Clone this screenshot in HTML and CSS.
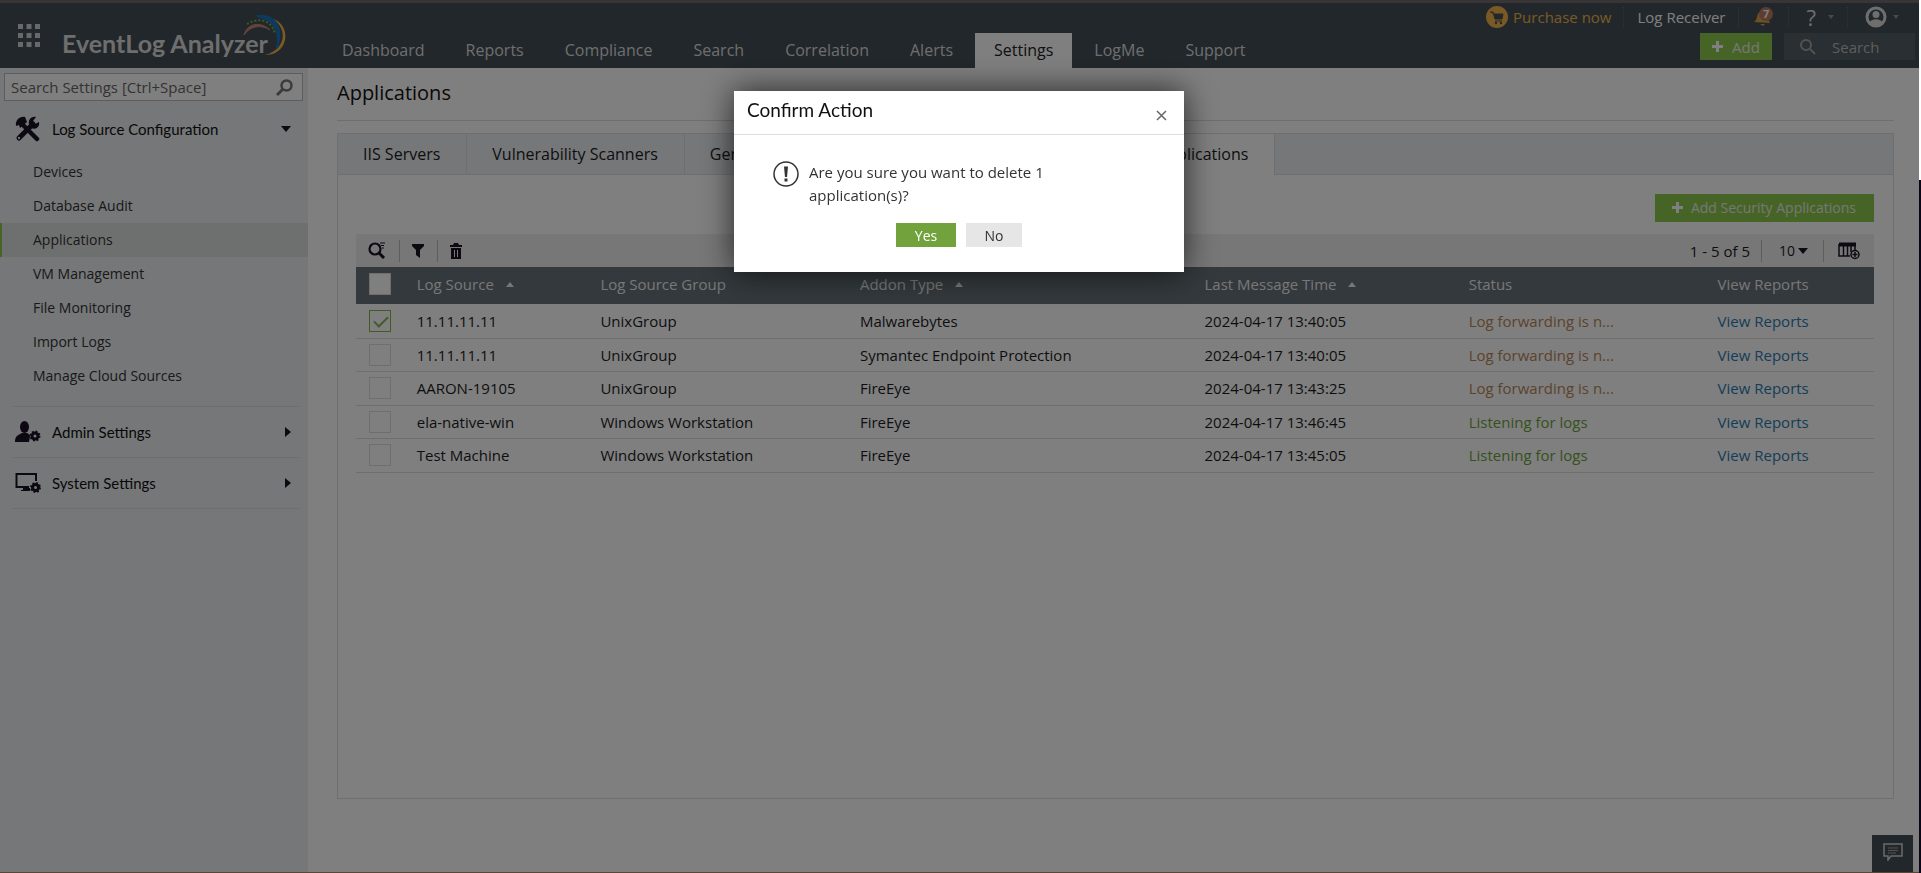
FILE: index.html
```
<!DOCTYPE html>
<html lang="en">
<head>
    <meta charset="UTF-8">
    <meta name="viewport" content="width=device-width, initial-scale=1.0">
    <title>EventLog Analyzer - Applications</title>
    <link rel="stylesheet" href="styles.css">
</head>
<body>
    <header class="header">
        <button class="apps-btn" aria-label="Apps">
            <svg width="22" height="24" viewBox="0 0 22 24" fill="#fff"><path d="M0 0h5v5H0zM8.500 0h5v5h-5zM17 0h5v5h-5zM0 9h5v5H0zM8.500 9h5v5h-5zM17 9h5v5h-5zM0 18h5v5H0zM8.500 18h5v5h-5zM17 18h5v5h-5z"/></svg>
        </button>
        <a href="#" class="logo">EventLog Analyzer
            <svg class="swoosh" width="44" height="42" viewBox="0 0 44 42" fill="none">
                <path d="M28 3C45 12 44 34 22 40C38 41 47 25 40 12C38 8 34 5 28 3z" fill="#f5b54a"/>
                <path d="M14 1C32-1 41 12 34 33C38 14 29 4 14 1z" fill="#1c74bb" stroke="#1c74bb" stroke-width="2"/>
                <path d="M4 9C14 3 28 3 32 19" stroke="#6fb53c" stroke-width="2" stroke-dasharray="2 2"/>
                <path d="M1 20C4 8 18 6 27 15C18 9 7 11 1 20z" fill="#c98a78" stroke="#c98a78"/>
            </svg>
        </a>
        <nav class="nav">
            <a href="#">Dashboard</a>
            <a href="#">Reports</a>
            <a href="#">Compliance</a>
            <a href="#">Search</a>
            <a href="#">Correlation</a>
            <a href="#">Alerts</a>
            <a href="#" class="active">Settings</a>
            <a href="#">LogMe</a>
            <a href="#">Support</a>
        </nav>
        <div class="header-right">
            <div class="user-links">
                <a href="#" class="purchase">
                    <svg width="22" height="22" viewBox="0 0 22 22"><circle cx="11" cy="11" r="11" fill="#f2b54a"/><path d="M4 6h3l2 7h7l1-5H8" fill="#444f56" stroke="#444f56"/><path d="M9 15h7" stroke="#444f56"/><circle cx="10" cy="17" r="1.200" fill="#444f56"/><circle cx="15" cy="17" r="1.200" fill="#444f56"/></svg>
                    Purchase now
                </a>
                <a href="#" class="receiver">Log Receiver</a>
                <button class="link-btn bell" aria-label="Notifications">
                    <svg width="19" height="20" viewBox="0 0 19 20"><path d="M0 15C4 13 2 6 7 4C12 2 15 7 14 12L16 16z" fill="#d9a04c"/><path d="M6 17h5l-2 2z" fill="#d9a04c"/><circle cx="12" cy="7" r="7" fill="#b87a5e"/><text x="9" y="11" class="bell-count">7</text></svg>
                </button>
                <button class="link-btn help" aria-label="Help"><span>?</span>
                    <svg width="6" height="4" viewBox="0 0 6 4" fill="#8b9398"><path d="M0 0h6L3 4z"/></svg>
                </button>
                <button class="link-btn profile" aria-label="Profile">
                    <svg width="22" height="22" viewBox="0 0 22 22"><circle cx="11" cy="11" r="9" fill="none" stroke="#ddd" stroke-width="3"/><circle cx="11" cy="8.500" r="3.500" fill="#ddd"/><path d="M4 17C6 12 16 12 18 17L11 21z" fill="#ddd"/></svg>
                    <svg width="6" height="4" viewBox="0 0 6 4" fill="#8b9398"><path d="M0 0h6L3 4z"/></svg>
                </button>
            </div>
            <div class="quick-actions">
                <button class="add-btn">
                    <svg width="11" height="11" viewBox="0 0 11 11"><path d="M5.500 0v11M0 5.500h11" stroke="#fff" stroke-width="3"/></svg>
                    Add
                </button>
                <label class="global-search">
                    <svg width="17" height="16" viewBox="0 0 17 16" fill="none" stroke="#a9a39f"><circle cx="7" cy="6" r="5" stroke-width="2"/><path d="M11 10l5 5" stroke-width="2"/></svg>
                    <input type="text" placeholder="Search" aria-label="Search">
                </label>
            </div>
        </div>
    </header>

    <div class="page">
        <aside class="sidebar">
            <label class="settings-search">
                <input type="text" placeholder="Search Settings [Ctrl+Space]" aria-label="Search Settings">
                <svg width="17" height="17" viewBox="0 0 17 17" fill="none" stroke="#777"><circle cx="10.500" cy="6.500" r="5" stroke-width="2.500"/><path d="M7 10l-6 6" stroke-width="3"/></svg>
            </label>
            <section class="group">
                <button class="group-title">
                    <svg width="26" height="26" viewBox="0 0 26 26"><path d="M5 6L22 23" stroke="#1a1225" stroke-width="4.500" stroke-linecap="round"/><path d="M4 22L18 8" stroke="#1a1225" stroke-width="5" stroke-linecap="round"/><path d="M1 10C0 4 5 0 10 1L12 6L5 12L4 9z" fill="#1a1225"/><path d="M14 8C13 3 17 0 21 1L18 5L20 8L24 6C25 11 21 14 16 12z" fill="#1a1225"/><circle cx="4" cy="22" r="1.200" fill="#ddd"/></svg>
                    <span>Log Source Configuration</span>
                    <svg width="10" height="6" viewBox="0 0 10 6" fill="#1a1225"><path d="M0 0h10L5 6z"/></svg>
                </button>
                <ul class="menu">
                    <li><a href="#">Devices</a></li>
                    <li><a href="#">Database Audit</a></li>
                    <li><a href="#" class="current">Applications</a></li>
                    <li><a href="#">VM Management</a></li>
                    <li><a href="#">File Monitoring</a></li>
                    <li><a href="#">Import Logs</a></li>
                    <li><a href="#">Manage Cloud Sources</a></li>
                </ul>
            </section>
            <section class="group">
                <button class="group-title">
                    <svg width="26" height="22" viewBox="0 0 26 22" fill="#1a1225"><ellipse cx="9.500" cy="6" rx="4.500" ry="6"/><path d="M0 21C0 15 3 14 7 12H12C14 13 15 14 15 15L14 21z"/><circle cx="20" cy="15" r="3" fill="none" stroke="#1a1225" stroke-width="3"/><circle cx="20" cy="15" r="4.500" fill="none" stroke="#1a1225" stroke-width="2" stroke-dasharray="1.800 1.734"/></svg>
                    <span>Admin Settings</span>
                    <svg width="6" height="10" viewBox="0 0 6 10" fill="#1a1225"><path d="M0 0v10L6 5z"/></svg>
                </button>
            </section>
            <section class="group">
                <button class="group-title">
                    <svg width="26" height="22" viewBox="0 0 26 22" fill="#1a1225"><path d="M14 15H1.500V2H21v7" fill="none" stroke="#1a1225" stroke-width="2"/><path d="M8 16h7v3H6v-1h2z"/><circle cx="20.500" cy="15.500" r="3" fill="none" stroke="#1a1225" stroke-width="3"/><circle cx="20.500" cy="15.500" r="4.500" fill="none" stroke="#1a1225" stroke-width="2" stroke-dasharray="1.800 1.734"/></svg>
                    <span>System Settings</span>
                    <svg width="6" height="10" viewBox="0 0 6 10" fill="#1a1225"><path d="M0 0v10L6 5z"/></svg>
                </button>
            </section>
        </aside>

        <main class="content">
            <h1>Applications</h1>
            <div class="panel">
                <div class="tabs">
                    <a href="#">IIS Servers</a>
                    <a href="#">Vulnerability Scanners</a>
                    <a href="#">General Applications</a>
                    <a href="#">Terminal Servers</a>
                    <a href="#" class="selected">Security Applications</a>
                </div>
                <div class="panel-body">
                    <button class="add-app-btn">
                        <svg width="11" height="11" viewBox="0 0 11 11"><path d="M5.500 0v11M0 5.500h11" stroke="#fff" stroke-width="3"/></svg>
                        Add Security Applications
                    </button>
                    <div class="toolbar">
                        <button aria-label="Search">
                            <svg width="18" height="17" viewBox="0 0 18 17" fill="none" stroke="#1a1225"><circle cx="7" cy="7" r="5.500" stroke-width="2.200"/><path d="M11 11l5 5" stroke-width="3"/><path d="M12 1h5M13 3.500h3M14 6h2" stroke-width="1"/></svg>
                        </button>
                        <button aria-label="Filter">
                            <svg width="12" height="14" viewBox="0 0 12 14" fill="#1a1225"><path d="M0 0h12v2L8 6v8L4 11V6L0 2z"/></svg>
                        </button>
                        <button aria-label="Delete">
                            <svg width="12" height="16" viewBox="0 0 12 16" fill="#1a1225"><path d="M0 2h3l1-2h4l1 2h3v2H0zM1 5h10v11H1z"/><path d="M4.500 7v7M7.500 7v7" stroke="#eee"/></svg>
                        </button>
                        <span class="range">1 - 5 of 5</span>
                        <button class="page-size">10
                            <svg width="10" height="6" viewBox="0 0 10 6" fill="#1a1225"><path d="M0 0h10L5 6z"/></svg>
                        </button>
                        <button class="columns-btn" aria-label="Columns">
                            <svg width="22" height="18" viewBox="0 0 22 18"><path d="M1 2.500h17" stroke="#1a1225" stroke-width="4"/><path d="M1 2v12h11M5.500 4v10M9.500 4v10M13 4v6M17 4v4" fill="none" stroke="#1a1225" stroke-width="1.500"/><circle cx="17" cy="12.500" r="4" fill="#eee" stroke="#1a1225" stroke-width="1.500"/><path d="M17 10v5M14.500 12.500h5" stroke="#1a1225" stroke-width="1.500"/></svg>
                        </button>
                    </div>
                    <table class="apps-table">
                        <thead>
                            <tr>
                                <th class="col-check"><input type="checkbox" aria-label="Select all"></th>
                                <th class="col-source">Log Source <i class="sort"></i></th>
                                <th class="col-group">Log Source Group</th>
                                <th class="col-type">Addon Type <i class="sort"></i></th>
                                <th class="col-time">Last Message Time <i class="sort"></i></th>
                                <th class="col-status">Status</th>
                                <th class="col-reports">View Reports</th>
                            </tr>
                        </thead>
                        <tbody>
                            <tr>
                                <td><input type="checkbox" aria-label="Select row 1" checked></td>
                                <td>11.11.11.11</td>
                                <td>UnixGroup</td>
                                <td>Malwarebytes</td>
                                <td>2024-04-17 13:40:05</td>
                                <td class="warn">Log forwarding is n...</td>
                                <td><a href="#">View Reports</a></td>
                            </tr>
                            <tr>
                                <td><input type="checkbox" aria-label="Select row 2"></td>
                                <td>11.11.11.11</td>
                                <td>UnixGroup</td>
                                <td>Symantec Endpoint Protection</td>
                                <td>2024-04-17 13:40:05</td>
                                <td class="warn">Log forwarding is n...</td>
                                <td><a href="#">View Reports</a></td>
                            </tr>
                            <tr>
                                <td><input type="checkbox" aria-label="Select row 3"></td>
                                <td>AARON-19105</td>
                                <td>UnixGroup</td>
                                <td>FireEye</td>
                                <td>2024-04-17 13:43:25</td>
                                <td class="warn">Log forwarding is n...</td>
                                <td><a href="#">View Reports</a></td>
                            </tr>
                            <tr>
                                <td><input type="checkbox" aria-label="Select row 4"></td>
                                <td>ela-native-win</td>
                                <td>Windows Workstation</td>
                                <td>FireEye</td>
                                <td>2024-04-17 13:46:45</td>
                                <td class="ok">Listening for logs</td>
                                <td><a href="#">View Reports</a></td>
                            </tr>
                            <tr>
                                <td><input type="checkbox" aria-label="Select row 5"></td>
                                <td>Test Machine</td>
                                <td>Windows Workstation</td>
                                <td>FireEye</td>
                                <td>2024-04-17 13:45:05</td>
                                <td class="ok">Listening for logs</td>
                                <td><a href="#">View Reports</a></td>
                            </tr>
                        </tbody>
                    </table>
                </div>
            </div>
        </main>
    </div>

    <button class="chat-btn" aria-label="Chat">
        <svg width="20" height="18" viewBox="0 0 20 18" fill="none" stroke="#d5d5d5"><path d="M1 1h18v12H8l-3 4v-4H1z" stroke-width="1.500"/><path d="M5 5h10M5 7.500h10M5 10h8" stroke="#aaa49e"/></svg>
    </button>

    <div class="overlay">
        <div class="modal" role="dialog" aria-labelledby="modal-title">
            <div class="modal-head">
                <h2 id="modal-title">Confirm Action</h2>
                <button class="close-btn" aria-label="Close">
                    <svg width="11" height="11" viewBox="0 0 11 11" stroke="#666" stroke-width="1.500"><path d="M1 1l9 9M10 1l-9 9"/></svg>
                </button>
            </div>
            <div class="modal-body">
                <svg width="26" height="26" viewBox="0 0 26 26"><circle cx="13" cy="13" r="12" fill="none" stroke="#333" stroke-width="1.500"/><path d="M11 5.500h4L14 16h-2z" fill="#333"/><rect x="11.500" y="17.500" width="3" height="3" fill="#333"/></svg>
                <p>Are you sure you want to delete 1 application(s)?</p>
            </div>
            <div class="modal-actions">
                <button class="yes-btn">Yes</button>
                <button class="no-btn">No</button>
            </div>
        </div>
    </div>
    <div class="scroll-track"><div class="scroll-thumb"></div></div>
</body>
</html>
```
FILE: styles.css
```
* {
    box-sizing: border-box;
}
body {
    margin: 0;
    padding-right: 2px;
    min-height: 100vh;
    display: flex;
    flex-direction: column;
    font-family: "Open Sans", "Noto Sans", sans-serif;
    font-size: 15px;
    color: #1c1c24;
    background: #fff;
    border-bottom: 1px solid #b68c6c;
}
a {
    color: inherit;
    text-decoration: none;
}
button {
    font: inherit;
    color: inherit;
    border: none;
    background: none;
    padding: 0;
    cursor: pointer;
}
input {
    font: inherit;
}
svg {
    flex: none;
}

/* header */
.header {
    display: flex;
    height: 68px;
    background: #444f56;
    border-top: 3px solid #736b6c;
    color: #ddd;
}
.apps-btn {
    align-self: flex-start;
    margin: 21px 0 0 18px;
    line-height: 0;
}
.apps-btn svg {
    opacity: 0.75;
}
.logo {
    position: relative;
    width: 280px;
    padding: 24px 0 0 22px;
    font-family: Lato, sans-serif;
    font-size: 25px;
    font-weight: bold;
    line-height: 32px;
    white-space: nowrap;
}
.swoosh {
    position: absolute;
    left: 203px;
    top: 12px;
}
.nav {
    display: flex;
    align-items: flex-end;
    gap: 3px;
    margin-left: 3px;
}
.nav a {
    padding: 0 19px;
    font-size: 16px;
    line-height: 35px;
}
.nav .active {
    background: #fff;
    color: #222;
}
.header-right {
    margin-left: auto;
    display: flex;
    flex-direction: column;
    align-items: flex-end;
    padding-right: 4px;
}
.user-links {
    display: flex;
    align-items: center;
    height: 30px;
    padding: 0 16px 2px 0;
}
.purchase {
    display: flex;
    align-items: center;
    gap: 5px;
    padding-right: 12px;
    color: #f2b54a;
}
.receiver,
.link-btn {
    border-left: 1px dotted #5f6b72;
    line-height: 20px;
}
.receiver {
    padding: 0 12px 0 13px;
    color: #fff;
}
.link-btn {
    display: flex;
    align-items: center;
    height: 20px;
}
.bell {
    padding: 0 15px;
}
.bell-count {
    font-family: "Open Sans", sans-serif;
    font-size: 11px;
    font-weight: bold;
    fill: #fff;
}
.help {
    gap: 12px;
    padding: 0 13px 0 18px;
    font-size: 22px;
}
.profile {
    gap: 6px;
    padding-left: 17px;
}
.quick-actions {
    display: flex;
    gap: 12px;
}
.add-btn {
    display: flex;
    align-items: center;
    justify-content: center;
    gap: 9px;
    width: 72px;
    height: 27px;
    background: #8cc84a;
    color: #eee;
}
.global-search {
    display: flex;
    align-items: center;
    gap: 16px;
    width: 131px;
    height: 27px;
    padding-left: 15px;
    background: #535e65;
}
.global-search input {
    width: 80px;
    padding: 0;
    border: none;
    background: none;
}
.global-search input::placeholder {
    color: #bbb;
}

/* sidebar */
.page {
    flex: 1;
    display: flex;
}
.sidebar {
    width: 308px;
    flex: none;
    background: #ebeef0;
}
.settings-search {
    display: flex;
    align-items: center;
    height: 28px;
    margin: 5px 5px 3px 4px;
    padding: 0 9px 0 6px;
    background: #fff;
    border: 1px solid #bbb;
}
.settings-search input {
    flex: 1;
    min-width: 0;
    padding: 0;
    border: none;
    background: none;
}
.settings-search input::placeholder {
    color: #666;
}
.group {
    margin: 0 9px 0 12px;
    border-bottom: 1px solid #dadddf;
}
.group-title {
    display: flex;
    align-items: center;
    gap: 11px;
    width: 100%;
    height: 50px;
    padding: 0 8px 0 3px;
    font-family: Lato, sans-serif;
    text-align: left;
    color: #111;
}
.group-title span {
    flex: 1;
}
.menu {
    list-style: none;
    margin: 1px -9px 13px -12px;
    padding: 0;
}
.menu a {
    display: block;
    padding-left: 31px;
    border-left: 2px solid transparent;
    font-size: 14px;
    line-height: 34px;
    color: #333;
}
.menu .current {
    background: #dde0df;
    border-left-color: #8cc84a;
}

/* content */
.content {
    flex: 1;
    min-width: 0;
    display: flex;
    flex-direction: column;
    padding: 0 25px 73px 29px;
}
h1 {
    margin: 0 0 12px;
    height: 53px;
    font-size: 20px;
    font-weight: normal;
    line-height: 50px;
    border-bottom: 1px solid #ddd;
    color: #111;
}
.panel {
    flex: 1;
    border: 1px solid #dcdfe0;
}
.tabs {
    display: flex;
    height: 41px;
    background: #ebeef0;
    border-bottom: 1px solid #dcdfe0;
}
.tabs a {
    padding: 0 26px 0 25px;
    font-size: 16px;
    line-height: 40px;
    white-space: nowrap;
    border-right: 1px solid #dcdfe0;
}
.tabs .selected {
    height: 41px;
    background: #fff;
}
.panel-body {
    display: flex;
    flex-direction: column;
    padding: 19px 19px 0 18px;
}
.add-app-btn {
    align-self: flex-end;
    display: flex;
    align-items: center;
    gap: 8px;
    height: 28px;
    margin-bottom: 12px;
    padding: 0 18px 2px 17px;
    font-size: 14px;
    background: #8cc84a;
    color: #eee;
}
.toolbar {
    display: flex;
    align-items: center;
    height: 33px;
    background: #efefef;
}
.toolbar button {
    display: flex;
    align-items: center;
    height: 22px;
    padding: 0 13px 0 12px;
}
.toolbar button + button,
.toolbar .page-size {
    border-left: 1px solid #bbb;
}
.range {
    margin-left: auto;
    padding-right: 11px;
}
.toolbar .page-size {
    gap: 3px;
    padding: 0 15px 0 17px;
    font-size: 14px;
}
.toolbar .columns-btn {
    padding: 0 14px;
}
.apps-table {
    width: 100%;
    table-layout: fixed;
    border-collapse: collapse;
}
.apps-table th {
    height: 37px;
    padding: 0 0 3px;
    font-weight: normal;
    text-align: left;
    background: #66727a;
    color: #eee;
}
.apps-table td {
    height: 34px;
    padding: 0;
    border-bottom: 1px solid #dcdcdc;
}
.apps-table tr:nth-child(even) td {
    height: 33px;
}
.apps-table td a {
    color: #2a7ab0;
}
.apps-table .warn {
    color: #b98659;
}
.apps-table .ok {
    color: #6ba33a;
}
.col-check { width: 4%; }
.col-source { width: 12.1%; }
.col-group { width: 17.1%; }
.col-type { width: 22.7%; }
.col-time { width: 17.4%; }
.col-status { width: 16.4%; }
.sort {
    display: inline-block;
    margin: 0 0 3px 8px;
    border: 4px solid transparent;
    border-top: none;
    border-bottom: 5px solid #eee;
}
.apps-table input {
    appearance: none;
    display: block;
    width: 22px;
    height: 22px;
    margin: 0 0 0 13px;
    border: 1px solid #dcdcdc;
    background: #fff;
}
.apps-table input:checked {
    border: 1px solid #7fb944;
}
.apps-table input:checked::before {
    content: "";
    display: block;
    width: 12px;
    height: 6px;
    margin: 5px 0 0 4px;
    border: solid #8fb457;
    border-width: 0 0 2px 2px;
    transform: rotate(-45deg);
}
.chat-btn {
    position: fixed;
    right: 8px;
    bottom: 1px;
    width: 41px;
    height: 37px;
    background: #444f56;
}

/* dialog */
.overlay {
    position: fixed;
    inset: 0;
    display: flex;
    justify-content: center;
    align-items: flex-start;
    padding: 91px 3px 0 0;
    background: rgba(0, 0, 0, 0.5);
}
.modal {
    width: 450px;
    padding-bottom: 25px;
    background: #fff;
    box-shadow: 0 0 30px rgba(0, 0, 0, 0.7);
    color: #333;
}
.modal-head {
    display: flex;
    justify-content: space-between;
    height: 44px;
    padding: 0 17px 0 13px;
    border-bottom: 1px solid #ddd;
}
.modal-head h2 {
    margin: 0;
    font-family: Lato, sans-serif;
    font-size: 19px;
    font-weight: normal;
    line-height: 38px;
    color: #111;
}
.close-btn {
    padding-top: 5px;
}
.modal-body {
    display: flex;
    gap: 10px;
    padding: 26px 120px 0 39px;
}
.modal-body p {
    margin: 0;
    line-height: 23px;
}
.modal-actions {
    display: flex;
    gap: 10px;
    padding: 16px 0 0 162px;
}
.yes-btn,
.no-btn {
    width: 60px;
    height: 24px;
    font-size: 14px;
    background: #72a23b;
    color: #fff;
}
.no-btn {
    width: 56px;
    background: #e6e6e6;
    color: #333;
}
.scroll-track {
    position: fixed;
    top: 0;
    right: 0;
    bottom: 0;
    width: 2px;
    background: #0b0518;
}
.scroll-thumb {
    height: 180px;
    background: #fff;
}
```
